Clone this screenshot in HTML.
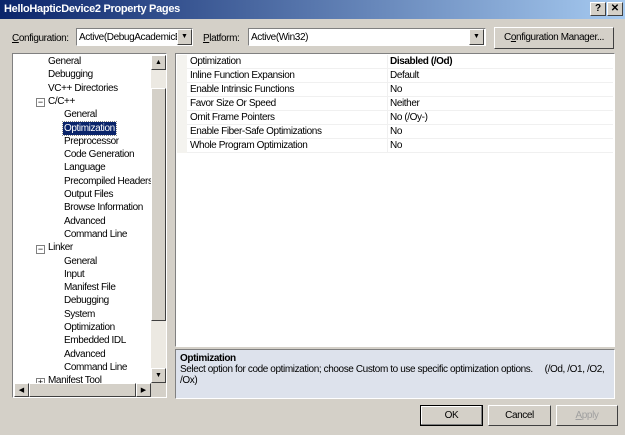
<!DOCTYPE html>
<html><head><style>
*{margin:0;padding:0;box-sizing:border-box}
body{width:625px;height:435px;background:#d4d0c8;font-family:"Liberation Sans",Tahoma,sans-serif;font-size:10px;letter-spacing:-0.4px;color:#000;position:relative;overflow:hidden}
.abs{position:absolute}
.title{left:0;top:0;width:625px;height:19px;background:linear-gradient(90deg,#0a246a,#a6caf0);color:#fff;font-weight:bold;font-size:11px;padding:3px 0 0 4px;letter-spacing:-0.3px}
.tb{top:2px;width:16px;height:14px;background:#d4d0c8;border:1px solid;border-color:#fff #404040 #404040 #fff;font-size:10px;font-weight:bold;text-align:center;line-height:12px;color:#000;letter-spacing:0}
.sunk{border:1px solid;border-color:#808080 #fff #fff #808080;background:#fff}
.btn{background:#d4d0c8;border:1px solid;border-color:#fff #404040 #404040 #fff;text-align:center;font-size:10px}
.tree div{position:absolute;white-space:nowrap;height:13px;line-height:13px}
.row{position:absolute;left:0;width:436px;height:14px;border-bottom:1px solid #f0f0f0;line-height:13px}
.row span{position:absolute}
.sb{background:#d4d0c8;border:1px solid;border-color:#fff #404040 #404040 #fff;width:15px;height:15px;font-size:7px;text-align:center;line-height:13px;letter-spacing:0}
.tree .box{position:absolute;width:9px;height:9px;border:1px solid #808080;background:#fff;font-size:9px;line-height:7px;text-align:center;letter-spacing:0}
</style></head><body>
<div class="abs title">HelloHapticDevice2 Property Pages</div>
<div class="abs tb" style="left:590px">?</div>
<div class="abs tb" style="left:607px">✕</div>

<div class="abs" style="left:12px;top:33px"><u>C</u>onfiguration:</div>
<div class="abs sunk" style="left:76px;top:28px;width:117px;height:18px;padding:3px 2px;white-space:nowrap;overflow:hidden">Active(DebugAcademicEd</div>
<div class="abs sb" style="left:177px;top:29px;height:16px">▼</div>
<div class="abs" style="left:203px;top:33px"><u>P</u>latform:</div>
<div class="abs sunk" style="left:248px;top:28px;width:238px;height:18px;padding:3px 2px">Active(Win32)</div>
<div class="abs sb" style="left:469px;top:29px;height:16px">▼</div>
<div class="abs btn" style="left:494px;top:27px;width:120px;height:22px;line-height:20px">C<u>o</u>nfiguration Manager...</div>

<div class="abs sunk" style="left:12px;top:53px;width:155px;height:345px"></div>
<div class="abs tree" style="left:14px;top:55px;width:137px;height:329px;overflow:hidden">
<div style="left:34px;top:0">General</div>
<div style="left:34px;top:13.3px">Debugging</div>
<div style="left:34px;top:26.6px">VC++ Directories</div>
<div class="box" style="left:22px;top:43px">−</div>
<div style="left:34px;top:39.9px">C/C++</div>
<div style="left:50px;top:53.2px">General</div>
<div style="left:49px;top:66.5px;background:#0a246a;color:#fff;padding:0 1px;outline:1px dotted #888">Optimization</div>
<div style="left:50px;top:79.8px">Preprocessor</div>
<div style="left:50px;top:93.1px">Code Generation</div>
<div style="left:50px;top:106.4px">Language</div>
<div style="left:50px;top:119.7px">Precompiled Headers</div>
<div style="left:50px;top:133px">Output Files</div>
<div style="left:50px;top:146.3px">Browse Information</div>
<div style="left:50px;top:159.6px">Advanced</div>
<div style="left:50px;top:172.9px">Command Line</div>
<div class="box" style="left:22px;top:189.5px">−</div>
<div style="left:34px;top:186.2px">Linker</div>
<div style="left:50px;top:199.5px">General</div>
<div style="left:50px;top:212.8px">Input</div>
<div style="left:50px;top:226.1px">Manifest File</div>
<div style="left:50px;top:239.4px">Debugging</div>
<div style="left:50px;top:252.7px">System</div>
<div style="left:50px;top:266px">Optimization</div>
<div style="left:50px;top:279.3px">Embedded IDL</div>
<div style="left:50px;top:292.6px">Advanced</div>
<div style="left:50px;top:305.9px">Command Line</div>
<div class="box" style="left:22px;top:322.5px">+</div>
<div style="left:34px;top:319.2px">Manifest Tool</div>
</div>
<div class="abs" style="left:151px;top:55px;width:15px;height:329px;background:#ece9e2"></div>
<div class="abs sb" style="left:151px;top:55px">▲</div>
<div class="abs sb" style="left:151px;top:88px;height:233px"></div>
<div class="abs sb" style="left:151px;top:368px">▼</div>
<div class="abs" style="left:14px;top:383px;width:137px;height:14px;background:#ece9e2"></div>
<div class="abs sb" style="left:14px;top:383px;height:14px">◀</div>
<div class="abs sb" style="left:29px;top:383px;width:107px;height:14px"></div>
<div class="abs sb" style="left:136px;top:383px;height:14px">▶</div>
<div class="abs" style="left:151px;top:383px;width:15px;height:14px;background:#d4d0c8"></div>

<div class="abs sunk" style="left:175px;top:53px;width:440px;height:294px"></div>
<div class="abs" style="left:177px;top:55px;width:436px;height:98px">
<div class="row"><span style="left:13px">Optimization</span><span style="left:213px;font-weight:bold">Disabled (/Od)</span></div>
<div class="row" style="top:14px"><span style="left:13px">Inline Function Expansion</span><span style="left:213px">Default</span></div>
<div class="row" style="top:28px"><span style="left:13px">Enable Intrinsic Functions</span><span style="left:213px">No</span></div>
<div class="row" style="top:42px"><span style="left:13px">Favor Size Or Speed</span><span style="left:213px">Neither</span></div>
<div class="row" style="top:56px"><span style="left:13px">Omit Frame Pointers</span><span style="left:213px">No (/Oy-)</span></div>
<div class="row" style="top:70px"><span style="left:13px">Enable Fiber-Safe Optimizations</span><span style="left:213px">No</span></div>
<div class="row" style="top:84px"><span style="left:13px">Whole Program Optimization</span><span style="left:213px">No</span></div>
<div class="abs" style="left:0;top:0;width:10px;height:98px;background:#f4f3ef"></div>
<div class="abs" style="left:210px;top:0;width:1px;height:98px;background:#f0f0f0"></div>
</div>

<div class="abs" style="left:175px;top:349px;width:440px;height:50px;background:#dde2ec;border:1px solid;border-color:#808080 #fff #fff #808080;padding:3px 4px;line-height:11px">
<b>Optimization</b><br>Select option for code optimization; choose Custom to use specific optimization options. &nbsp;&nbsp;&nbsp;&nbsp;(/Od, /O1, /O2, /Ox)</div>

<div class="abs btn" style="left:420px;top:405px;width:63px;height:21px;line-height:19px;border:1px solid #000;box-shadow:inset -1px -1px #808080,inset 1px 1px #fff">OK</div>
<div class="abs btn" style="left:488px;top:405px;width:63px;height:21px;line-height:19px">Cancel</div>
<div class="abs btn" style="left:556px;top:405px;width:62px;height:21px;line-height:19px;color:#a0a0a0"><u>A</u>pply</div>
</body></html>
